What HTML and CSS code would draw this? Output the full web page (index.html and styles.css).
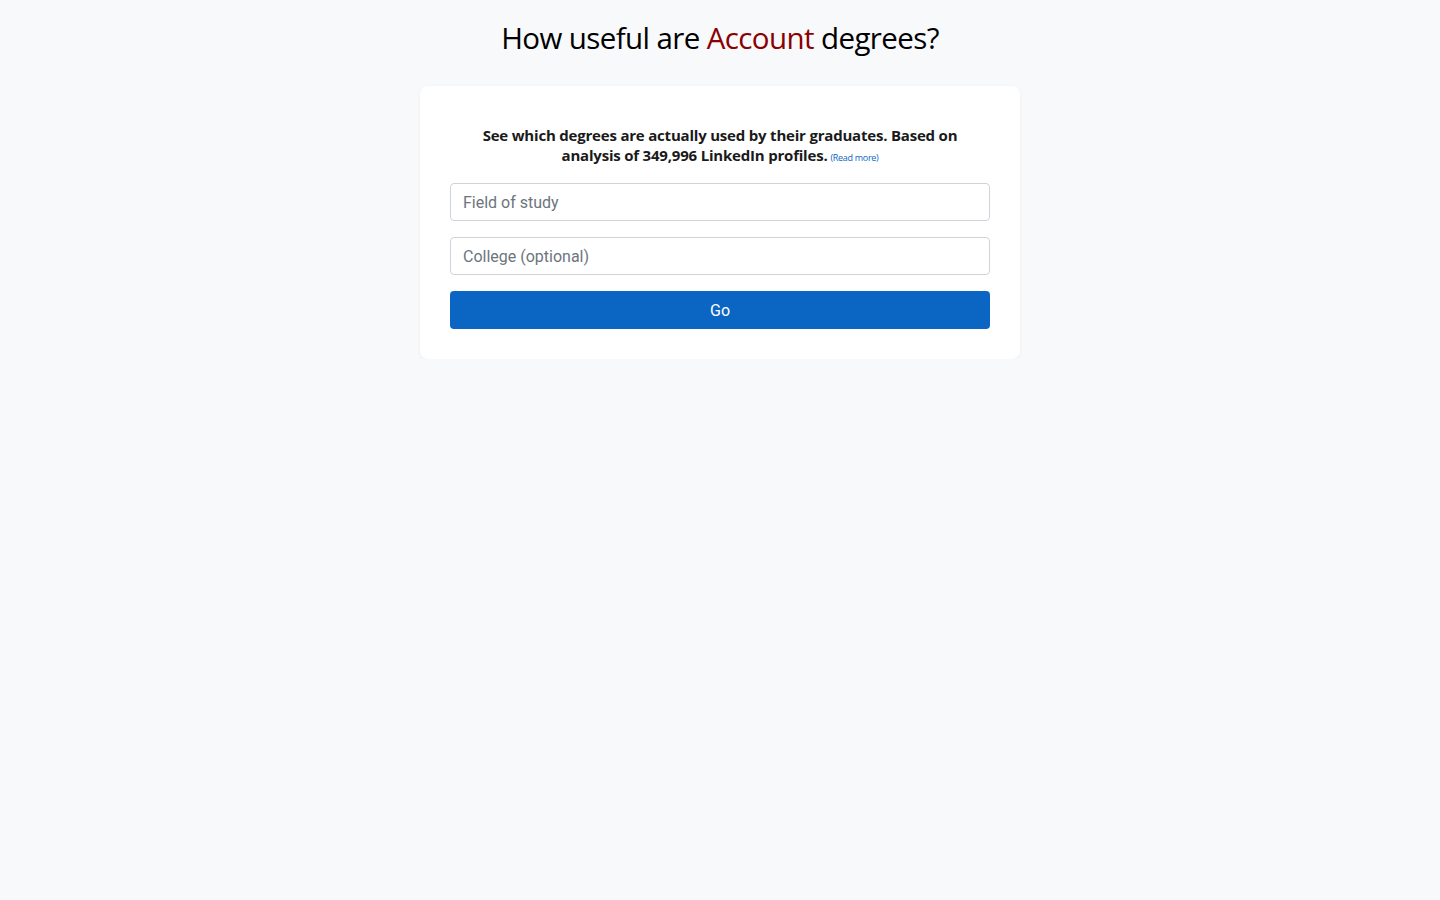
FILE: index.html
```html
<!DOCTYPE html>
<html>
<head>
<meta charset="utf-8">
<link rel="stylesheet" href="styles.css">
</head>
<body>
<h1 class="title">How useful are <span class="accent">Account</span> degrees?</h1>
<div class="card">
  <p class="intro"><span class="intro-text">See which degrees are actually used by their graduates. Based on analysis of 349,996 LinkedIn profiles.</span><a class="more" href="#">(Read more)</a></p>
  <input class="field" type="text" placeholder="Field of study">
  <input class="field" type="text" placeholder="College (optional)">
  <button class="go">Go</button>
</div>
</body>
</html>
```
FILE: styles.css
```css
html, body { margin: 0; padding: 0; }
body {
  background: #f7f9fb;
  font-family: "Open Sans", "Noto Sans", sans-serif;
  color: #000;
}
.title {
  margin: 0;
  padding-top: 17px;
  height: 69px;
  box-sizing: border-box;
  text-align: center;
  font-weight: 400;
  font-size: 29.5px;
  line-height: 42px;
  letter-spacing: -0.6px;
}
.accent { color: #8b0000; }
.card {
  width: 600px;
  box-sizing: border-box;
  margin: 17px auto 0;
  background: #fff;
  border-radius: 8px;
  padding: 39px 30px 30px;
  box-shadow: 0 1px 4px rgba(0,0,0,0.05);
  display: flex;
  flex-direction: column;
  gap: 16px;
}
.intro {
  margin: 0 0 2px;
  text-align: center;
  font-weight: 700;
  font-size: 15px;
  line-height: 20px;
  letter-spacing: -0.2px;
  color: #1a1a1a;
  padding: 0 20px;
}
.more {
  display: inline-block;
  margin-left: 3px;
  font-weight: 400;
  font-size: 9px;
  line-height: 10px;
  letter-spacing: -0.3px;
  color: #0b66c3;
  text-decoration: none;
}
.field {
  height: 38px;
  box-sizing: border-box;
  border: 1px solid #ced4da;
  border-radius: 4px;
  padding: 0 12px;
  font-family: Roboto, sans-serif;
  font-size: 16px;
  color: #495057;
}
.field::placeholder { color: #6c757d; }
.go {
  height: 38px;
  border: none;
  border-radius: 4px;
  background: #0b66c3;
  color: #fff;
  font-family: Roboto, sans-serif;
  font-size: 16px;
}
```
